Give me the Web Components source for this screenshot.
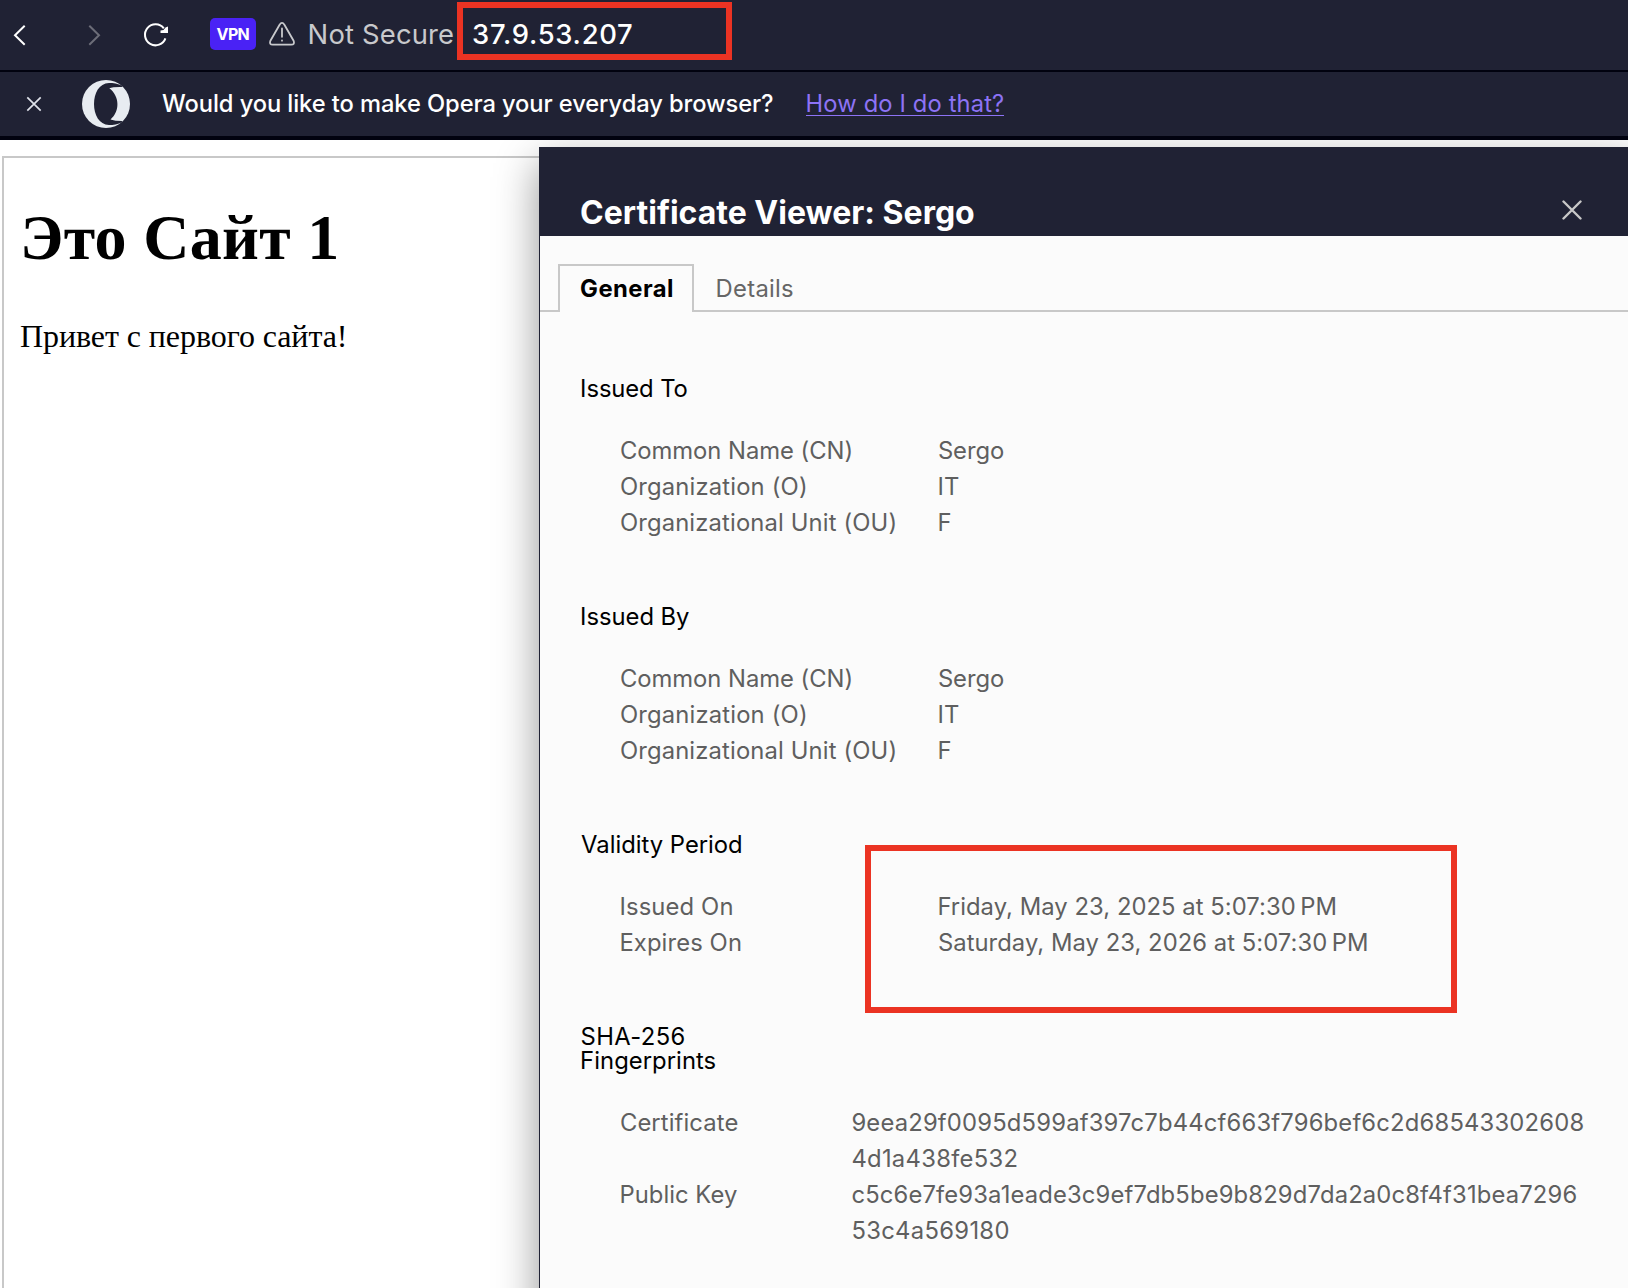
<!DOCTYPE html>
<html lang="en">
<head>
<meta charset="utf-8">
<title>Certificate Viewer</title>
<style>
html,body{margin:0;height:100%;overflow:hidden;background:#fff}
</style>
</head>
<body>
<browser-window></browser-window>
<script>
class BaseElement extends HTMLElement{
  connectedCallback(){
    if(!this.shadowRoot){
      this.attachShadow({mode:'open'}).innerHTML=this.render();
    }
  }
}
const define=(name,render)=>customElements.define(name,class extends BaseElement{render(){return render(this)}});

/* A single line of text whose tracking is tuned so that its ink spans `ink` pixels. */
const ctx=document.createElement('canvas').getContext('2d');
customElements.define('tracked-text',class extends HTMLElement{
  connectedCallback(){
    if(!this.shadowRoot)this.attachShadow({mode:'open'}).innerHTML='<style>:host{display:block;white-space:pre}</style><slot></slot>';
    const cs=getComputedStyle(this),t=this.textContent;
    ctx.font=`${cs.fontWeight} ${cs.fontSize} ${cs.fontFamily}`;
    const m=ctx.measureText(t),w=m.actualBoundingBoxRight+m.actualBoundingBoxLeft;
    const n=[...t].length-1;
    if(n>0)this.style.letterSpacing=((+this.getAttribute('ink')-w)/n).toFixed(3)+'px';
    this.style.marginLeft=(m.actualBoundingBoxLeft*.5-.4).toFixed(2)+'px';
  }
});

define('browser-window',()=>`<style>
:host{display:flex;flex-direction:column;height:1288px;width:1628px;font-family:Inter,"Liberation Sans",sans-serif}
</style>
<address-bar></address-bar>
<default-prompt></default-prompt>
<page-area></page-area>`);

define('address-bar',()=>`<style>
:host{display:flex;align-items:flex-start;height:70px;background:#202234;border-bottom:2px solid #01020f;font-size:27.4px;line-height:40px}
svg{display:block;flex:none}
.badge{box-sizing:border-box;width:46px;height:32px;margin:18px 13px 0 0;padding-left:7px;border-radius:5px;background:#4a22f5;color:#fff;font-size:16px;font-weight:700;line-height:32px}
.state{width:148px;padding:14px 0 0 .5px;color:#c8c9cc}
.url{box-sizing:border-box;width:275px;height:58px;margin-top:2px;border:6px solid #eb3323;padding:6px 0 0 10px;color:#fff;font-weight:500}
</style>
<svg width="210" height="70" fill="none" stroke-width="2">
<path d="M24.7 25.7 15 35.2l9.7 9.5" stroke="#fff"/>
<path d="m89.3 25.7 9.7 9.5-9.7 9.5" stroke="#6c6d78"/>
<path d="M165.4 38.3A10.5 10.5 0 1 1 163.8 28.4" stroke="#fff"/>
<path d="M168 26.5v6.5h-7.5v-2.5l3-.5 2-2.5z" fill="#fff"/>
</svg>
<div class="badge"><tracked-text ink="33">VPN</tracked-text></div>
<svg width="39.5" height="70" fill="none" stroke="#c8c9cc" stroke-width="1.8" stroke-linejoin="round" stroke-linecap="round">
<path d="M10.6 24.7q2.4-3.6 4.8 0l9.2 16q1.4 4-2.4 4H3.8q-3.8 0-2.4-4z"/>
<path d="M13 28.5v8.3M13 40.5v.2"/>
</svg>
<div class="state"><tracked-text ink="143.5">Not Secure</tracked-text></div>
<div class="url"><tracked-text ink="159">37.9.53.207</tracked-text></div>`);

define('default-prompt',()=>`<style>
:host{display:flex;align-items:flex-start;height:64px;background:#202234;border-bottom:4px solid #01020f;font-size:23.7px;line-height:36px;color:#fff}
svg{flex:none}
.q{width:643.5px;padding-top:14px;font-weight:500}
.a{height:29px;width:198px;margin-top:14px;border-bottom:1px solid #8d73f5;color:#8d73f5}
.a tracked-text{padding-left:1px}
</style>
<svg width="162.5" height="64" fill="none">
<path d="m27.3 25.3 13.4 13.4m0-13.4L27.3 38.7" stroke="#dfe2ea" stroke-width="1.7"/>
<circle cx="106" cy="32" r="24" fill="#e8ecf1"/>
<path d="M122.5 14C118 11.5 113 11 109 11C99 11.5 94 21 94 32S99 52.5 109 53C113 53 118 52.5 122.5 50L121.7 49Q115 49 110.5 47.5C120 39.5 120 24.5 109.3 16.3Q113 14.8 121.7 15z" fill="#202234"/>
</svg>
<div class="q"><tracked-text ink="611">Would you like to make Opera your everyday browser?</tracked-text></div>
<div class="a"><tracked-text ink="195.5">How do I do that?</tracked-text></div>`);

define('page-area',()=>`<style>
:host{display:flex;flex:1;position:relative;overflow:hidden;background:#fff}
</style>
<site-page></site-page><certificate-dialog></certificate-dialog>`);

define('site-page',()=>`<style>
:host{display:flow-root;flex:1;margin:16px 0 0 2px;border:solid #c8c8c8;border-width:2px 0 0 2px;padding:0 16px;font:32px "Liberation Serif",serif;color:#000}
h1{font-size:64px;margin:43px 0;letter-spacing:.3px}
p{margin:0;letter-spacing:-.08px}
</style><h1>Это Сайт 1</h1><p>Привет с первого сайта!</p>`);

define('certificate-dialog',()=>`<style>
:host{box-sizing:border-box;position:absolute;left:539px;top:7px;width:1100px;height:1200px;background:#fbfbfb;border-left:1px solid #202234;box-shadow:0 16px 40px rgba(0,0,0,.42);font-size:23.8px;color:#000}
header{display:flex;justify-content:space-between;height:89px;margin-left:-1px;background:#202234;color:#fff;font-size:32px;font-weight:650;line-height:40px}
.t{padding:46px 0 0 42px}
svg{margin:53px 57px 0 0}
.body{padding:65px 0 0 41.5px;display:flex;flex-direction:column;gap:64px}
.mark{position:absolute;left:325px;top:698px;width:580px;height:156px;border:6px solid #eb3323}
</style>
<header><div class="t"><tracked-text ink="393">Certificate Viewer: Sergo</tracked-text></div>
<svg width="20" height="20" stroke="#c8c8c8" stroke-width="2.4" stroke-linecap="round"><path d="m1.5 1.5 17 17m0-17-17 17"/></svg></header>
<tab-strip></tab-strip>
<div class="body">
<cert-section>
<tracked-text slot="title" ink="105.5">Issued To</tracked-text>
<cert-row><tracked-text slot="k" ink="230.5">Common Name (CN)</tracked-text><tracked-text ink="65">Sergo</tracked-text></cert-row>
<cert-row><tracked-text slot="k" ink="185">Organization (O)</tracked-text><tracked-text ink="19.5">IT</tracked-text></cert-row>
<cert-row><tracked-text slot="k" ink="274.5">Organizational Unit (OU)</tracked-text><tracked-text ink="12">F</tracked-text></cert-row>
</cert-section>
<cert-section>
<tracked-text slot="title" ink="107">Issued By</tracked-text>
<cert-row><tracked-text slot="k" ink="230.5">Common Name (CN)</tracked-text><tracked-text ink="65">Sergo</tracked-text></cert-row>
<cert-row><tracked-text slot="k" ink="185">Organization (O)</tracked-text><tracked-text ink="19.5">IT</tracked-text></cert-row>
<cert-row><tracked-text slot="k" ink="274.5">Organizational Unit (OU)</tracked-text><tracked-text ink="12">F</tracked-text></cert-row>
</cert-section>
<cert-section>
<tracked-text slot="title" ink="160">Validity Period</tracked-text>
<cert-row><tracked-text slot="k" ink="111">Issued On</tracked-text><tracked-text ink="396">Friday, May 23, 2025 at 5:07:30&#x202f;PM</tracked-text></cert-row>
<cert-row><tracked-text slot="k" ink="119.5">Expires On</tracked-text><tracked-text ink="428">Saturday, May 23, 2026 at 5:07:30&#x202f;PM</tracked-text></cert-row>
</cert-section>
<cert-section style="--key:231.5px">
<tracked-text slot="title" ink="103">SHA-256</tracked-text><tracked-text slot="title" ink="133.5">Fingerprints</tracked-text>
<cert-row><tracked-text slot="k" ink="116.5">Certificate</tracked-text><tracked-text ink="731">9eea29f0095d599af397c7b44cf663f796bef6c2d68543302608</tracked-text><tracked-text ink="164">4d1a438fe532</tracked-text></cert-row>
<cert-row><tracked-text slot="k" ink="115.5">Public Key</tracked-text><tracked-text ink="724">c5c6e7fe93a1eade3c9ef7db5be9b829d7da2a0c8f4f31bea7296</tracked-text><tracked-text ink="156">53c4a569180</tracked-text></cert-row>
</cert-section>
</div>
<div class="mark"></div>`);

define('tab-strip',()=>`<style>
:host{display:flex;height:76px;box-sizing:border-box;line-height:36px}
div{box-sizing:border-box;height:48px;margin-top:28px}
.edge{width:18px;border-bottom:2px solid #c8c8c8}
.on{width:136px;border:solid #c8c8c8;border-width:2px 2px 0;padding:5px 0 0 21px;font-weight:700;color:#000}
.off{flex:1;padding:7px 0 0 23px;border-bottom:2px solid #c8c8c8;color:#666}
</style><div class="edge"></div><div class="on"><tracked-text ink="91">General</tracked-text></div><div class="off"><tracked-text ink="75.5">Details</tracked-text></div>`);

define('cert-section',()=>`<style>
:host{display:block}
.h{line-height:24px;margin-bottom:32px}
.r{padding-left:39.3px;color:#5f5f5f}
</style><div class="h"><slot name="title"></slot></div><div class="r"><slot></slot></div>`);

define('cert-row',()=>`<style>
:host{display:flex;line-height:36px}
.k{width:var(--key,318px)}
</style><div class="k"><slot name="k"></slot></div><div class="v"><slot></slot></div>`);
</script>
</body>
</html>
